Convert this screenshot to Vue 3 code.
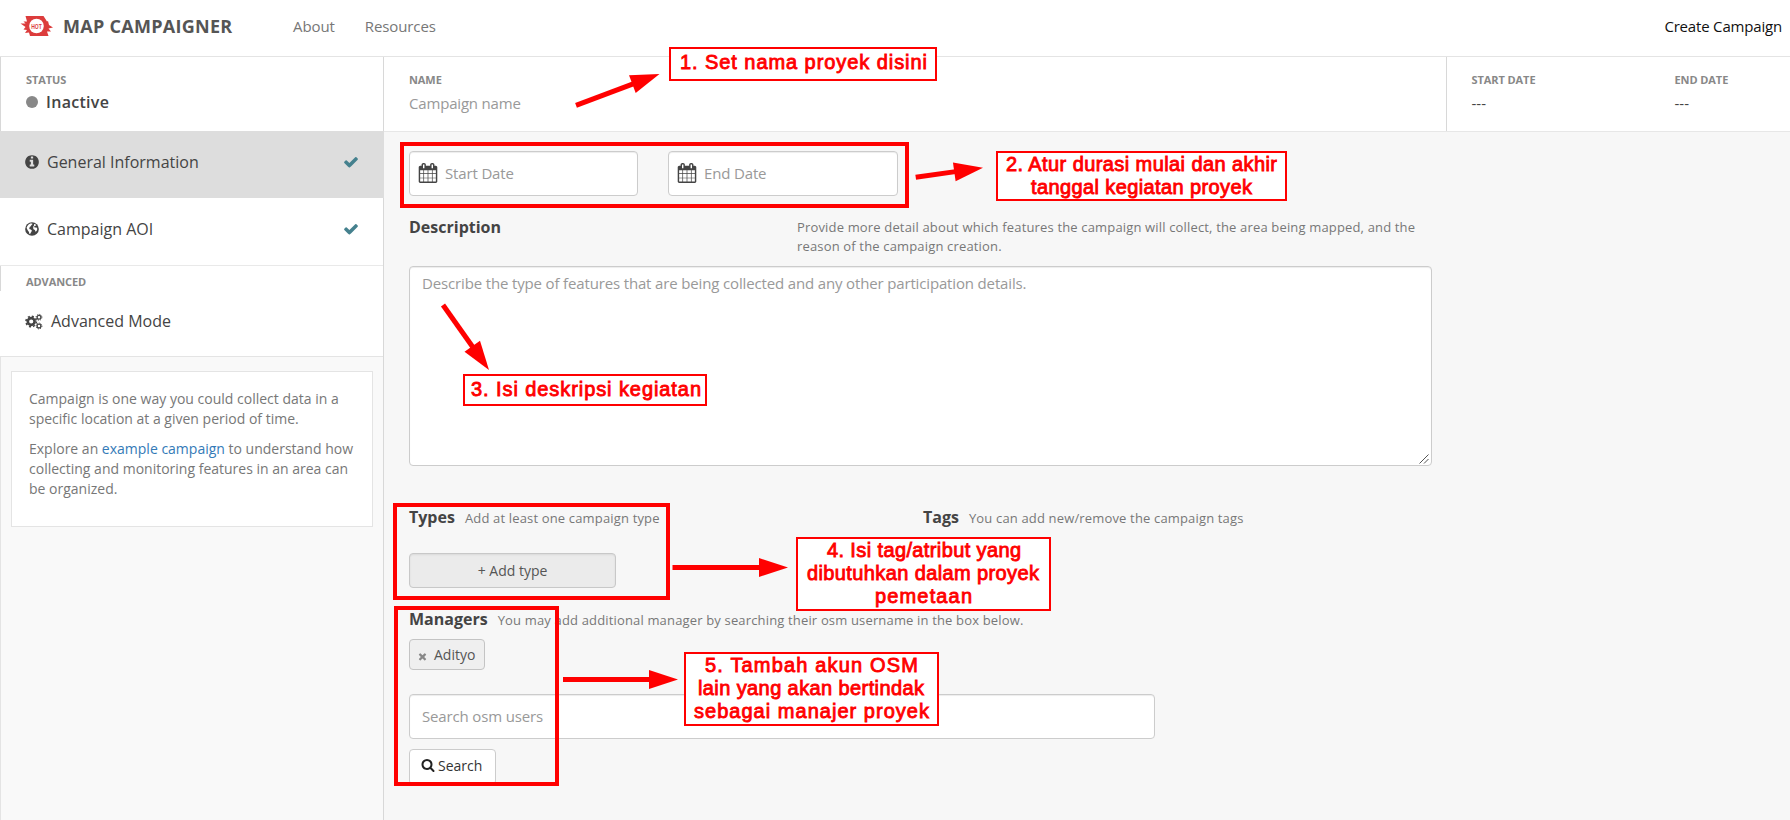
<script setup>
const icons = {
  check: 'M1671 566q0 40-28 68l-724 724-136 136q-28 28-68 28t-68-28l-136-136-362-362q-28-28-28-68t28-68l136-136q28-28 68-28t68 28l294 295 656-657q28-28 68-28t68 28l136 136q28 28 28 68z',
  info: 'M1152 1376v-160q0-14-9-23t-23-9h-96v-512q0-14-9-23t-23-9h-320q-14 0-23 9t-9 23v160q0 14 9 23t23 9h96v320h-96q-14 0-23 9t-9 23v160q0 14 9 23t23 9h448q14 0 23-9t9-23zm-128-896v-160q0-14-9-23t-23-9h-192q-14 0-23 9t-9 23v160q0 14 9 23t23 9h192q14 0 23-9t9-23zm640 416q0 209-103 385.5t-279.5 279.5-385.5 103-385.5-103-279.5-279.5-103-385.5 103-385.5 279.5-279.5 385.5-103 385.5 103 279.5 279.5 103 385.5z',
  search: 'M1216 832q0-185-131.5-316.5t-316.5-131.5-316.5 131.5-131.5 316.5 131.5 316.5 316.5 131.5 316.5-131.5 131.5-316.5zm512 832q0 52-38 90t-90 38q-54 0-90-38l-343-342q-179 124-399 124-143 0-273.5-55.5t-225-150-150-225-55.5-273.500 55.500-273.500 150-225 225-150 273.500-55.500 273.500 55.500 225 150 150 225 55.500 273.500q0 220-124 399l343 343q37 37 37 90z',
  times: 'M1490 1322q0 40-28 68l-136 136q-28 28-68 28t-68-28l-294-294-294 294q-28 28-68 28t-68-28l-136-136q-28-28-28-68t28-68l294-294-294-294q-28-28-28-68t28-68l136-136q28-28 68-28t68 28l294 294 294-294q28-28 68-28t68 28l136 136q28 28 28 68t-28 68l-294 294 294 294q28 28 28 68z',
  calendar: 'M192 1664h288v-288h-288v288zm352 0h320v-288h-320v288zm-352-352h288v-320h-288v320zm352 0h320v-320h-320v320zm-352-384h288v-288h-288v288zm736 736h320v-288h-320v288zm-384-736h320v-288h-320v288zm768 736h288v-288h-288v288zm-384-352h320v-320h-320v320zm-352-864v-288q0-13-9.500-22.500t-22.500-9.500h-64q-13 0-22.500 9.500t-9.500 22.500v288q0 13 9.500 22.500t22.500 9.500h64q13 0 22.500-9.500t9.500-22.500zm736 864h288v-320h-288v320zm-384-384h320v-288h-320v288zm384 0h288v-288h-288v288zm32-480v-288q0-13-9.500-22.500t-22.500-9.500h-64q-13 0-22.500 9.500t-9.500 22.500v288q0 13 9.500 22.500t22.500 9.500h64q13 0 22.500-9.500t9.500-22.500zm384-64v1280q0 52-38 90t-90 38h-1408q-52 0-90-38t-38-90v-1280q0-52 38-90t90-38h128v-96q0-66 47-113t113-47h64q66 0 113 47t47 113v96h384v-96q0-66 47-113t113-47h64q66 0 113 47t47 113v96h128q52 0 90 38t38 90z',
}

const frames = [
  { x: 400, y: 142, w: 509, h: 66 },
  { x: 393, y: 503, w: 277, h: 97 },
  { x: 394, y: 606, w: 165, h: 180 },
]

const callouts = [
  { x: 669, y: 47, w: 268, h: 34, lines: [{ t: '1. Set nama proyek disini', x: 680, y: 69, w: 247 }] },
  { x: 996, y: 151, w: 291, h: 50, lines: [
    { t: '2. Atur durasi mulai dan akhir', x: 1006, y: 171, w: 271 },
    { t: 'tanggal kegiatan proyek', x: 1031, y: 194, w: 221 },
  ] },
  { x: 463, y: 374, w: 244, h: 32, lines: [{ t: '3. Isi deskripsi kegiatan', x: 471, y: 396, w: 230 }] },
  { x: 796, y: 537, w: 255, h: 74, lines: [
    { t: '4. Isi tag/atribut yang', x: 827, y: 557, w: 194 },
    { t: 'dibutuhkan dalam proyek', x: 807, y: 580, w: 232 },
    { t: 'pemetaan', x: 875, y: 603, w: 97 },
  ] },
  { x: 684, y: 652, w: 255, h: 74, lines: [
    { t: '5. Tambah akun OSM', x: 705, y: 672, w: 213 },
    { t: 'lain yang akan bertindak', x: 698, y: 695, w: 226 },
    { t: 'sebagai manajer proyek', x: 694, y: 718, w: 235 },
  ] },
]

const arrows = [
  { x1: 576, y1: 105.3, x2: 659.5, y2: 74 },
  { x1: 915.7, y1: 177.3, x2: 983, y2: 167.7 },
  { x1: 443, y1: 305, x2: 489, y2: 370 },
  { x1: 672.5, y1: 567.5, x2: 788, y2: 567.5 },
  { x1: 563, y1: 679.5, x2: 678, y2: 679.5 },
].map((a) => ({
  ...a,
  len: Math.hypot(a.x2 - a.x1, a.y2 - a.y1),
  angle: (Math.atan2(a.y2 - a.y1, a.x2 - a.x1) * 180) / Math.PI,
}))
</script>

<template>
  <div class="page">
    <header class="topbar">
      <svg class="logo" width="34" height="22" viewBox="0 0 34 22">
        <path fill="#dc3c3c" d="M5.500 1H23.500L27 6.500 28 6 29 10 33 12.500 28.500 13.500 31 16.500 27 16.500 28.500 21H10L9 17.500 5 18 7 15 3.500 14.500 5.500 12 .5 8.500 5.500 8.500 3.500 6.500 7 6.500z" />
        <circle cx="16.500" cy="11" r="7.300" fill="#fff" />
        <text x="16.500" y="13.700" text-anchor="middle" textLength="10.500" lengthAdjust="spacingAndGlyphs">HOT</text>
      </svg>
      <span class="brand">MAP CAMPAIGNER</span>
      <nav>
        <a class="about">About</a>
        <a class="resources">Resources</a>
      </nav>
      <span class="create">Create Campaign</span>
    </header>

    <div class="body">
      <aside>
        <section class="status">
          <div class="label">STATUS</div>
          <div class="state"><i class="dot"></i>Inactive</div>
        </section>
        <div class="item active">
          <svg class="ico" viewBox="0 0 1792 1792"><path :d="icons.info" /></svg>
          <span class="gi">General Information</span>
          <svg class="tick" viewBox="0 0 1792 1792"><path :d="icons.check" /></svg>
        </div>
        <div class="item">
          <svg class="ico" viewBox="0 0 16 16">
            <circle cx="8" cy="8" r="6.860" />
            <path fill="#fff" d="M4.600 3.400 6.200 2.500 8 2.400 8.600 3 7.300 4.200 6.800 5.200 5.600 6 5.500 7 5.200 8 6.800 8.500 7.900 9.600 7.300 11 6.400 12.200 6.200 13.300 5.200 12.400 5 11 4 9.800 3.200 8.200 2.600 6.800 3.400 5zM10 3.200 11 3 12.300 4.200 11.400 4.800 10.600 5 10 6 11 6.500 12.600 6.400 13.300 7.800 13 9.200 12 10.600 11.300 10.400 11 9 9.800 8.500 9.200 7.400 9.300 5.600 10 4.600z" />
          </svg>
          <span class="aoi">Campaign AOI</span>
          <svg class="tick" viewBox="0 0 1792 1792"><path :d="icons.check" /></svg>
        </div>
        <section class="advanced">
          <div class="label">ADVANCED</div>
          <div class="mode">
            <svg class="cogs" width="18" height="17" viewBox="0 0 18 17">
              <g fill="none" stroke="#444">
                <circle cx="6.200" cy="8.500" r="3.400" stroke-width="2.600" />
                <circle cx="6.200" cy="8.500" r="5.200" stroke-width="1.600" stroke-dasharray="2.040 2.044" />
                <circle cx="14" cy="4.300" r="1.900" stroke-width="1.300" />
                <circle cx="14" cy="4.300" r="2.900" stroke-width="1" stroke-dasharray="1.140 1.138" />
                <circle cx="14" cy="13" r="1.900" stroke-width="1.300" />
                <circle cx="14" cy="13" r="2.900" stroke-width="1" stroke-dasharray="1.140 1.138" />
              </g>
            </svg>
            <span>Advanced Mode</span>
          </div>
        </section>
        <div class="help">
          <div class="card">
            <p>Campaign is one way you could collect data in a<br>specific location at a given period of time.</p>
            <p>Explore an <a>example campaign</a> to understand how<br>collecting and monitoring features in an area can<br>be organized.</p>
          </div>
        </div>
      </aside>

      <main>
        <div class="titlebar">
          <div class="name">
            <div class="label">NAME</div>
            <div class="ph">Campaign name</div>
          </div>
          <div class="dates">
            <div class="date"><div class="label">START DATE</div><div class="val">---</div></div>
            <div class="date"><div class="label">END DATE</div><div class="val">---</div></div>
          </div>
        </div>

        <div class="form">
          <div class="pickers">
            <div class="box picker"><svg viewBox="0 0 1792 1792"><path :d="icons.calendar" /></svg><span>Start Date</span></div>
            <div class="box picker"><svg viewBox="0 0 1792 1792"><path :d="icons.calendar" /></svg><span>End Date</span></div>
          </div>
          <div class="desc">
            <h4>Description</h4>
            <p class="hint">Provide more detail about which features the campaign will collect, the area being mapped, and the<br>reason of the campaign creation.</p>
          </div>
          <div class="box area">
            <span>Describe the type of features that are being collected and any other participation details.</span>
            <svg class="grip" width="10" height="10" viewBox="0 0 10 10"><path d="M.5 9.500 9.500.5M5 9.500 9.500 5" stroke="#555" /></svg>
          </div>
          <div class="cols">
            <div class="col">
              <div class="head"><h4>Types</h4><span class="hint">Add at least one campaign type</span></div>
              <div class="addtype">+ Add type</div>
            </div>
            <div class="col">
              <div class="head"><h4>Tags</h4><span class="hint">You can add new/remove the campaign tags</span></div>
            </div>
          </div>
          <div class="head managers"><h4>Managers</h4><span class="hint">You may add additional manager by searching their osm username in the box below.</span></div>
          <div class="chip"><svg viewBox="0 0 1792 1792"><path :d="icons.times" /></svg>Adityo</div>
          <div class="box users">Search osm users</div>
          <div class="searchbtn"><svg viewBox="0 0 1792 1792"><path :d="icons.search" /></svg>Search</div>
        </div>
      </main>
    </div>

    <svg class="notes" width="1790" height="820" viewBox="0 0 1790 820">
      <rect v-for="(f, i) in frames" :key="'f' + i" :x="f.x + 2" :y="f.y + 2" :width="f.w - 4" :height="f.h - 4" fill="none" stroke="#f00" stroke-width="4" />
      <g v-for="(a, i) in arrows" :key="'a' + i" :transform="`translate(${a.x1} ${a.y1}) rotate(${a.angle})`" fill="#f00">
        <rect x="0" y="-2.500" :width="a.len - 26" height="5" />
        <polygon :points="`${a.len - 29},-9.500 ${a.len},0 ${a.len - 29},9.500`" />
      </g>
      <g v-for="(c, i) in callouts" :key="'c' + i">
        <rect :x="c.x + 1" :y="c.y + 1" :width="c.w - 2" :height="c.h - 2" fill="#fff" stroke="#f00" stroke-width="2" />
        <text v-for="l in c.lines" :key="l.t" class="note" :x="l.x" :y="l.y" :textLength="l.w">{{ l.t }}</text>
      </g>
    </svg>
  </div>
</template>

<style>
body { margin: 0; background: #f7f7f7; }
</style>

<style scoped>
.page { position: relative; width: 1790px; height: 820px; overflow: hidden; display: flex; flex-direction: column; font-family: "Open Sans", sans-serif; font-size: 16px; color: #444; background: #f7f7f7; box-sizing: border-box; }
.page * { box-sizing: border-box; }
h4, p { margin: 0; }
svg { display: block; flex: none; }

.topbar { height: 57px; flex: none; background: #fff; border-bottom: 1px solid #e4e4e4; display: flex; align-items: center; padding: 0 8px 5px 20px; line-height: 22px; white-space: nowrap; }
.logo text { font: 700 7.500px "Liberation Sans", sans-serif; fill: #dc3c3c; }
.brand { margin-left: 9px; width: 230px; font-size: 18px; font-weight: 700; letter-spacing: .28px; color: #555; }
nav { display: flex; color: #777; font-size: 15px; letter-spacing: -.1px; }
.resources { margin-left: 30px; }
.create { margin-left: auto; font-size: 15px; letter-spacing: -.18px; color: #111; }

.body { flex: 1; display: flex; min-height: 0; }
aside { width: 384px; flex: none; display: flex; flex-direction: column; border-right: 1px solid #d8d8d8; }
.label { font-size: 11px; font-weight: 700; line-height: 16px; letter-spacing: -.08px; color: #888; white-space: nowrap; }
.status { height: 74px; background: #fff; border-left: 1px solid #d8d8d8; padding: 15px 0 0 25px; }
.state { display: flex; align-items: center; font-weight: 600; line-height: 22px; margin-top: 3px; letter-spacing: .3px; color: #444; }
.dot { width: 12px; height: 12px; border-radius: 50%; background: #888; margin-right: 8px; }
.item { height: 67px; background: #fff; display: flex; align-items: center; padding: 0 24px 5px 24px; }
.item.active { background: #ddd; margin-right: -1px; padding-right: 25px; }
.ico { width: 16px; height: 16px; fill: #444; margin-right: 7px; }
.tick { width: 16px; height: 16px; fill: #45818e; margin-left: auto; }
.advanced { height: 92px; border-top: 1px solid #e9e9e9; border-bottom: 1px solid #e4e4e4; background: linear-gradient(#d8d8d8, #d8d8d8) 0 0 / 1px 25px no-repeat #fff; padding: 8px 0 0 26px; }
.mode { display: flex; align-items: center; margin: 19px 0 0 -1px; line-height: 24px; }
.cogs { margin-right: 8px; }
.help { flex: 1; border-left: 1px solid #e4e4e4; padding: 14px 10px 0; background: #f9f9f9; }
.card { height: 156px; background: #fff; border: 1px solid #e4e4e4; padding: 17px 0 0 17px; font-size: 14px; line-height: 20px; color: #777; white-space: nowrap; }
.card p { margin-bottom: 10px; }
.card a { color: #337ab7; }

main { flex: 1; min-width: 0; }
.titlebar { height: 75px; background: #fff; border-bottom: 1px solid #e7e7e7; display: flex; overflow: hidden; }
.name { flex: none; width: 1063px; padding: 15px 0 0 25px; border-right: 1px solid #d8d8d8; }
.ph { font-size: 15px; line-height: 22px; margin-top: 4px; letter-spacing: -.18px; color: #999; }
.dates { flex: none; display: flex; padding: 15px 0 0 24.5px; }
.date { width: 203px; }
.val { font-size: 15px; line-height: 22px; margin-top: 4px; }

.form { padding: 19px 0 0 25px; }
.box { border: 1px solid #ccc; border-radius: 4px; background: #fff; box-shadow: inset 0 1px 1px rgba(0,0,0,.075); color: #999; font-size: 15px; letter-spacing: -.15px; }
.pickers { display: flex; gap: 30px; }
.picker { width: 229px; height: 45px; display: flex; align-items: center; padding: 0 0 1px 8px; }
.picker span { padding-bottom: 1px; }
.picker + .picker { width: 230px; }
.picker svg { width: 20px; height: 20px; fill: #444; margin-right: 7px; }
h4 { font-size: 16px; font-weight: 700; line-height: 22px; color: #444; }
.hint { font-size: 13px; line-height: 19px; letter-spacing: .16px; color: #777; white-space: nowrap; }
.desc { display: flex; height: 50px; margin-top: 20px; }
.desc h4 { width: 388px; }
.desc .hint { margin-top: 2px; }
.area { width: 1023px; height: 200px; padding: 4px 12px 5px; line-height: 24px; display: flex; }
.grip { margin: auto 0 0 auto; position: relative; left: 10px; top: 4px; }
.cols { display: flex; height: 123px; margin-top: 40px; }
.col { width: 514px; }
.head { display: flex; align-items: baseline; gap: 10px; }
.addtype { width: 207px; height: 35px; margin-top: 25px; border: 1px solid #c8c8c8; border-radius: 4px; background: #ebebeb; box-shadow: inset 0 1px 2px rgba(0,0,0,.08); color: #555; font-size: 14px; line-height: 33px; text-align: center; }
.managers { height: 28px; margin-top: -21px; }
.chip { width: 76px; height: 31px; margin-top: 3px; border: 1px solid #c4c4c4; border-radius: 4px; background: #efefef; display: flex; align-items: center; font-size: 14px; padding-left: 7px; color: #555; }
.chip svg { width: 11px; height: 11px; fill: #888; margin: 3px 6px 0 0; }
.users { width: 746px; height: 45px; margin-top: 24px; line-height: 43px; padding-left: 12px; }
.searchbtn { width: 87px; height: 36px; margin-top: 10px; border: 1px solid #ccc; border-radius: 4px; background: #fff; display: flex; align-items: center; font-size: 14px; padding: 0 0 4px 11px; color: #333; }
.searchbtn svg { width: 14px; height: 14px; fill: #222; margin-right: 3px; }

.notes { position: absolute; left: 0; top: 0; }
.note { font: 400 20px "Liberation Sans", Arial, sans-serif; fill: #f00; stroke: #f00; stroke-width: .85px; }
</style>
